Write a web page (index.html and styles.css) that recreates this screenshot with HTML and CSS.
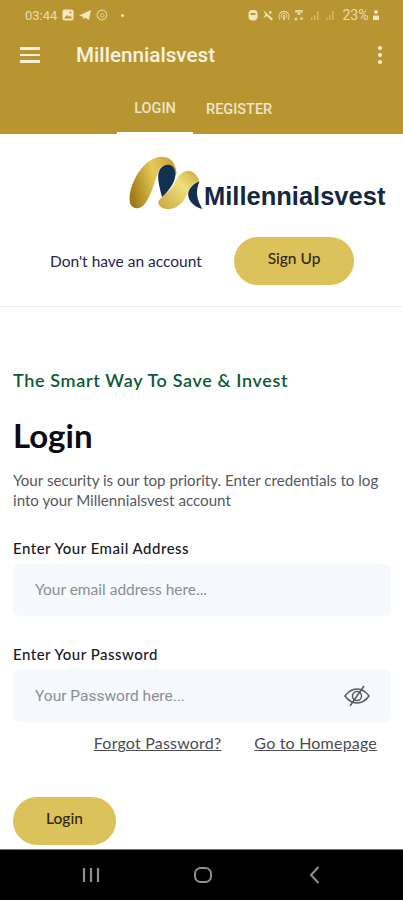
FILE: index.html
```html
<!DOCTYPE html>
<html lang="en">

<head>
    <meta charset="UTF-8">
    <meta name="viewport" content="width=device-width, initial-scale=1.0">
    <title>Millennialsvest Login</title>
    <link rel="stylesheet" href="styles.css">
</head>

<body>
    <div class="phone">
        <header class="app-header">
            <div class="status-bar">
                <div class="status-left">
                    <span class="status-text">03:44</span>
                    <svg class="status-icon" viewBox="0 0 12 12"><rect x="0.5" y="0.5" width="11" height="11" rx="2" fill="#f3e6c0"/><path d="M2 9.500 5 6l2 2 1.500-1.500L10 9.500z" fill="#b89531"/><circle cx="8.500" cy="3.500" r="1" fill="#b89531"/></svg>
                    <svg class="status-icon" viewBox="0 0 12 12"><path d="M0 6.500 12 1 9.800 11 6 8.500 4.600 10.500 4 7.700z" fill="#f3e6c0"/></svg>
                    <svg class="status-icon" viewBox="0 0 12 12"><circle cx="6" cy="6" r="4.800" fill="none" stroke="#e5d29a" stroke-width="1.200"/><circle cx="6.300" cy="6.500" r="1.800" fill="none" stroke="#e5d29a"/></svg>
                    <span class="status-dot"></span>
                </div>
                <div class="status-right">
                    <svg class="status-icon" viewBox="0 0 12 12"><rect x="1.500" y="1" width="9" height="10.500" rx="4" fill="#f3e6c0"/><rect x="3.500" y="4" width="5" height="2" fill="#b89531"/></svg>
                    <svg class="status-icon" viewBox="0 0 12 12"><path d="M1 1 11 10 9.500 11.500 5 7 1.500 9 3.500 5.500z" fill="#f3e6c0"/><path d="M8 1.500l2 2-2 1.500-1-1z" fill="#f3e6c0"/></svg>
                    <svg class="status-icon" viewBox="0 0 12 12"><path d="M2 10.500A5 5 0 1 1 10 10.500" fill="none" stroke="#e5d29a" stroke-width="1.300"/><path d="M4 9A2.800 2.800 0 1 1 8 9" fill="none" stroke="#e5d29a"/><rect x="5" y="6" width="2" height="5" fill="#e5d29a"/></svg>
                    <svg class="status-icon" viewBox="0 0 12 12"><path d="M2 1h8v2.500H7.500V6H4.500V3.500H2z" fill="#e5d29a"/><circle cx="3" cy="10" r="1.500" fill="#e5d29a"/><circle cx="8.500" cy="9.500" r="1.500" fill="#e5d29a"/></svg>
                    <svg class="status-icon signal" viewBox="0 0 12 12"><path d="M2 11V8.500h1.500V11zM5 11V6h1.500v5zM8 11V2h1.500v9z" fill="#d3b96f"/></svg>
                    <svg class="status-icon signal" viewBox="0 0 12 12"><path d="M2 11V8.500h1.500V11zM5 11V6h1.500v5zM8 11V2h1.500v9z" fill="#d3b96f"/></svg>
                    <span class="status-text battery-text">23%</span>
                    <svg class="status-icon battery" viewBox="0 0 8 12"><circle cx="4" cy="3" r="2" fill="#f3e6c0"/><path d="M1 6.500h6v4.500H1z" fill="#f3e6c0"/></svg>
                </div>
            </div>
            <div class="toolbar">
                <div class="menu-icon"><span></span><span></span><span></span></div>
                <div class="toolbar-title">Millennialsvest</div>
                <div class="more-icon"><span></span><span></span><span></span></div>
            </div>
            <div class="tabs">
                <div class="tab tab-active">LOGIN</div>
                <div class="tab">REGISTER</div>
            </div>
        </header>

        <main class="content">
            <div class="top-section">
                <div class="logo">
                    <svg class="logo-mark" viewBox="0 0 76 58">
                        <defs>
                            <linearGradient id="goldA" x1="0" y1="0.6" x2="1" y2="0.3">
                                <stop offset="0" stop-color="#a37a18"/>
                                <stop offset="0.55" stop-color="#e6ca58"/>
                                <stop offset="1" stop-color="#c6a23a"/>
                            </linearGradient>
                            <linearGradient id="goldB" x1="0" y1="1" x2="1" y2="0">
                                <stop offset="0" stop-color="#c9a63c"/>
                                <stop offset="0.6" stop-color="#efe07e"/>
                                <stop offset="1" stop-color="#c9a63c"/>
                            </linearGradient>
                        </defs>
                        <path d="M1 46C0 32 12 8 27 3C36 0 44 3 47 11C49 15 49 19 48 22C46 15 42 11 37 11C33 11 31 14 29.500 19C26 30 22 42 17 49C14 53 10 55 7 54C3 53 1 50 1 46Z" fill="url(#goldA)"/>
                        <path d="M40 10C45 10 47.500 14 47.500 20C47.500 27 42 35 34 43C32 36 30 28 30 22C30 15 34 10 40 10Z" fill="#12304f"/>
                        <path d="M30 47C36 40 43 36 46 30C49 24 52 17 60 16C65 15.500 70 20 72 27C66 29 62 33 60 39C57 46 51 55 41 55C34 55 30 52 30 47Z" fill="url(#goldB)"/>
                        <path d="M72 27C66 29 61 34 60.500 40C60.500 46 66 53 75 55C73 50 66 42 72 27Z" fill="#12304f"/>
                    </svg>
                    <span class="logo-text">Millennialsvest</span>
                </div>
                <div class="signup-row">
                    <span class="signup-text">Don't have an account</span>
                    <a class="pill-btn signup-btn">Sign Up</a>
                </div>
            </div>

            <div class="login-form">
                <div class="tagline">The Smart Way To Save &amp; Invest</div>
                <h1 class="form-title">Login</h1>
                <p class="form-desc">Your security is our top priority. Enter credentials to log into your Millennialsvest account</p>

                <label class="field-label">Enter Your Email Address</label>
                <div class="field">Your email address here...</div>

                <label class="field-label">Enter Your Password</label>
                <div class="field field-password">
                    <span>Your Password here...</span>
                    <svg class="eye-icon" viewBox="0 0 28 24">
                        <path d="M2 12C6 6.500 10 5 14 5s8 1.500 12 7c-4 5.500-8 7-12 7S6 17.500 2 12z" fill="none" stroke="#55585c" stroke-width="1.500"/>
                        <circle cx="14" cy="12" r="4.500" fill="none" stroke="#55585c" stroke-width="1.500"/>
                        <path d="M21 2 7 22" stroke="#55585c" stroke-width="1.500"/>
                    </svg>
                </div>

                <div class="form-links">
                    <a class="form-link">Forgot Password?</a>
                    <a class="form-link">Go to Homepage</a>
                </div>

                <a class="pill-btn login-btn">Login</a>
            </div>
        </main>

        <nav class="nav-bar">
            <svg class="nav-icon" viewBox="0 0 20 20"><path d="M3 3v14M10 3v14M17 3v14" stroke="#8f8f8f" stroke-width="2.200" fill="none"/></svg>
            <svg class="nav-icon" viewBox="0 0 20 20"><rect x="2" y="3" width="16" height="14" rx="5.500" stroke="#8f8f8f" stroke-width="2" fill="none"/></svg>
            <svg class="nav-icon" viewBox="0 0 20 20"><path d="M13.500 2 6 10l7.500 8" stroke="#8f8f8f" stroke-width="2" fill="none"/></svg>
        </nav>
    </div>
</body>

</html>
```

FILE: styles.css
```css
* {
    box-sizing: border-box;
}

body {
    margin: 0;
    font-family: Lato, "Open Sans", sans-serif;
    background-color: #fff;
}

.phone {
    display: flex;
    flex-direction: column;
    width: 403px;
    height: 900px;
    overflow: hidden;
}

.app-header {
    height: 134px;
    flex-shrink: 0;
    background-color: #b89531;
    color: #f6efdc;
}

.status-bar {
    display: flex;
    justify-content: space-between;
    align-items: center;
    height: 28px;
    padding: 2px 23px 0 25px;
}

.status-left,
.status-right {
    display: flex;
    align-items: center;
}

.status-left {
    gap: 5px;
}

.status-right {
    gap: 3.500px;
}

.status-text {
    font-family: Roboto, sans-serif;
    font-size: 13px;
    color: #eadcae;
}

.battery-text {
    margin-left: 3px;
    font-size: 14px;
}

.status-icon {
    width: 12px;
    height: 12px;
}

.battery {
    width: 8px;
}

.status-dot {
    width: 3px;
    height: 3px;
    margin-left: 8px;
    border-radius: 50%;
    background-color: #f3e6c0;
}

.toolbar {
    display: flex;
    align-items: center;
    height: 54px;
    padding: 0 21px 0 20px;
}

.menu-icon {
    display: flex;
    flex-direction: column;
    gap: 4px;
    width: 20px;
}

.menu-icon span {
    height: 2.500px;
    background-color: #f6efdc;
}

.toolbar-title {
    margin-left: 36px;
    font-family: Roboto, sans-serif;
    font-size: 20.700px;
    font-weight: 500;
    color: #f8f2e2;
}

.more-icon {
    display: flex;
    flex-direction: column;
    gap: 3px;
    margin-left: auto;
}

.more-icon span {
    width: 4px;
    height: 4px;
    border-radius: 50%;
    background-color: #f6efdc;
}

.tabs {
    display: flex;
    height: 52px;
    padding-left: 117px;
}

.tab {
    display: flex;
    align-items: center;
    justify-content: center;
    height: 52px;
    padding: 3px 13px 0;
    font-family: Roboto, sans-serif;
    font-size: 14.500px;
    font-weight: 500;
    color: #f0e5c8;
}

.tab-active {
    width: 76px;
    padding: 3px 0 0;
    border-bottom: 2px solid #fff;
}

.content {
    flex: 1;
    background-color: #fff;
}

.top-section {
    height: 173px;
    padding-top: 21px;
    border-bottom: 1px solid #ececec;
}

.logo {
    display: flex;
    align-items: flex-end;
    height: 57px;
    margin-left: 128px;
}

.logo-mark {
    width: 76px;
    height: 57px;
    flex-shrink: 0;
}

.logo-text {
    margin-bottom: 1px;
    font-family: "Liberation Sans", Arial, sans-serif;
    font-size: 25.500px;
    line-height: 30px;
    font-weight: 700;
    color: #14283f;
}

.signup-row {
    display: flex;
    align-items: center;
    height: 48px;
    margin-top: 25px;
    padding-left: 50px;
}

.signup-text {
    width: 184px;
    font-size: 15.500px;
    color: #26264a;
}

.pill-btn {
    display: flex;
    align-items: center;
    justify-content: center;
    height: 48px;
    padding-bottom: 7px;
    border-radius: 24px;
    background-color: #dcc25a;
    font-size: 15.500px;
    font-weight: 500;
    color: #2e2818;
}

.signup-btn {
    width: 120px;
}

.login-form {
    padding: 61px 12px 0 13px;
}

.tagline {
    height: 24px;
    font-size: 18px;
    line-height: 24px;
    font-weight: 600;
    letter-spacing: 0.650px;
    color: #0f5a32;
}

.form-title {
    margin: 21px 0 0;
    font-size: 33px;
    line-height: 44px;
    font-weight: 700;
    color: #0b0b16;
}

.form-desc {
    margin: 13px 0 0;
    font-size: 15.150px;
    line-height: 20px;
    color: #55585f;
}

.field-label {
    display: block;
    margin-top: 28px;
    font-size: 15px;
    line-height: 20px;
    font-weight: 500;
    letter-spacing: 0.500px;
    color: #18181f;
}

.field {
    display: flex;
    align-items: center;
    justify-content: space-between;
    height: 52px;
    margin-top: 6px;
    padding: 0 20px 2px 22px;
    border-radius: 6px;
    background-color: #f6f9fd;
    font-size: 15.500px;
    color: #8a8e93;
}

.field-password {
    padding-bottom: 0;
    font-family: Roboto, sans-serif;
}

.eye-icon {
    width: 28px;
    height: 24px;
}

.form-links {
    display: flex;
    justify-content: flex-end;
    gap: 33px;
    margin-top: 11px;
    padding-right: 14px;
}

.form-link {
    font-size: 16px;
    line-height: 20px;
    letter-spacing: 0.200px;
    color: #4a4c50;
    text-decoration: underline;
}

.login-btn {
    width: 103px;
    margin-top: 44px;
}

.nav-bar {
    display: flex;
    justify-content: center;
    align-items: center;
    gap: 92px;
    height: 51px;
    flex-shrink: 0;
    padding-left: 2px;
    border-top: 1px solid #777;
    background-color: #000;
}

.nav-icon {
    width: 20px;
    height: 20px;
}
```
